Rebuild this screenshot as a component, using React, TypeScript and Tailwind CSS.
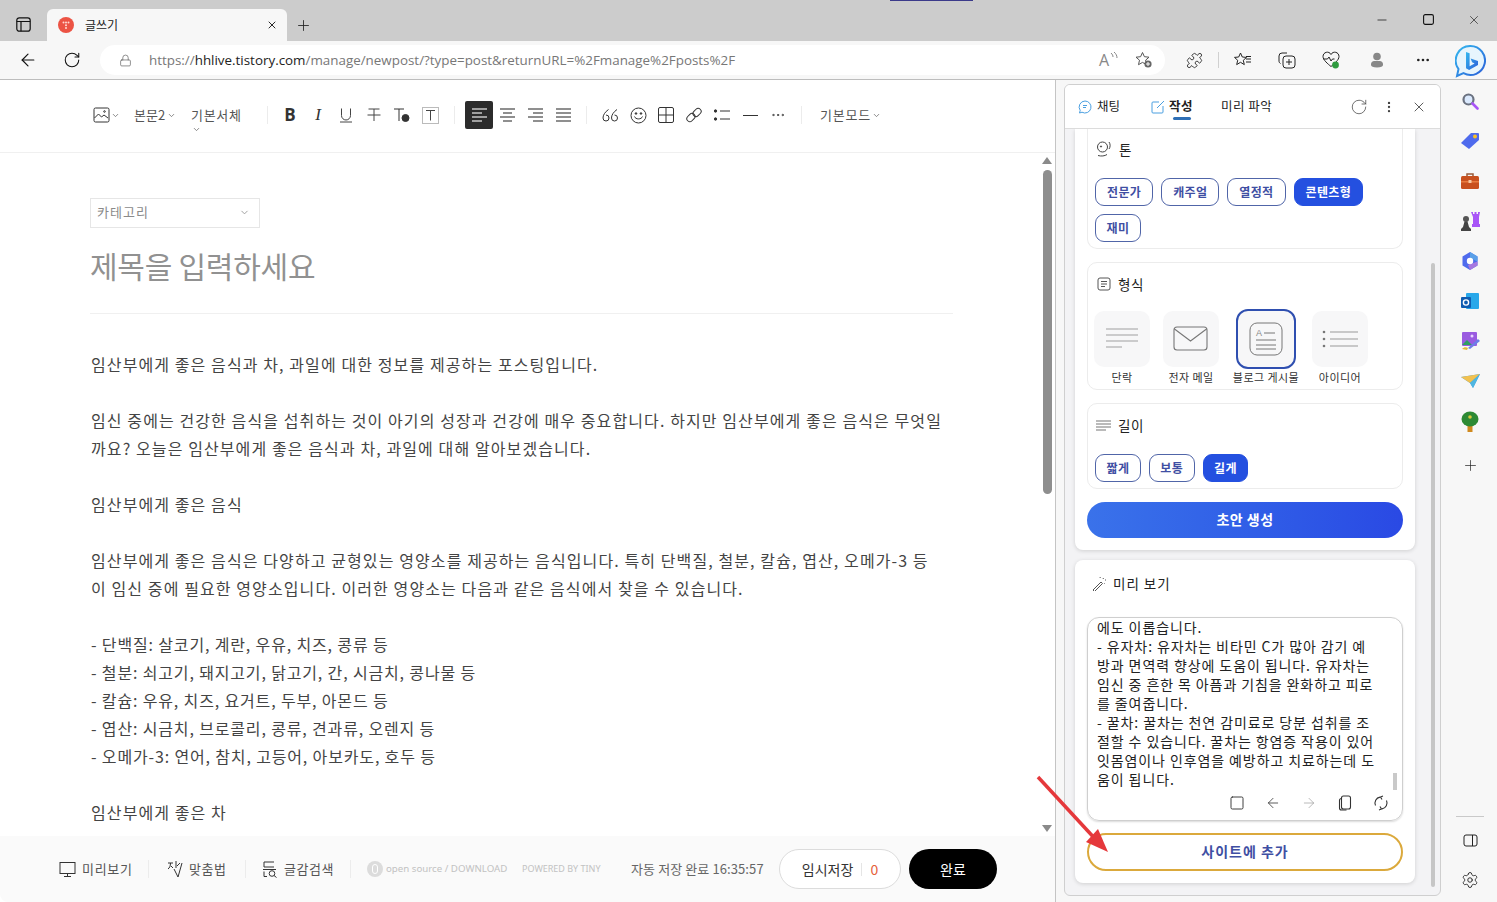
import { ArrowLeft, ArrowRight, ChevronDown, Lock, Minus, MoreHorizontal, MoreVertical, Plus, Puzzle, RotateCw, Settings, Square, X } from "lucide-react";
import type { ReactNode } from "react";

const BODY_LINES = [
  "임산부에게 좋은 음식과 차, 과일에 대한 정보를 제공하는 포스팅입니다.",
  "",
  "임신 중에는 건강한 음식을 섭취하는 것이 아기의 성장과 건강에 매우 중요합니다. 하지만 임산부에게 좋은 음식은 무엇일",
  "까요? 오늘은 임산부에게 좋은 음식과 차, 과일에 대해 알아보겠습니다.",
  "",
  "임산부에게 좋은 음식",
  "",
  "임산부에게 좋은 음식은 다양하고 균형있는 영양소를 제공하는 음식입니다. 특히 단백질, 철분, 칼슘, 엽산, 오메가-3 등",
  "이 임신 중에 필요한 영양소입니다. 이러한 영양소는 다음과 같은 음식에서 찾을 수 있습니다.",
  "",
  "- 단백질: 살코기, 계란, 우유, 치즈, 콩류 등",
  "- 철분: 쇠고기, 돼지고기, 닭고기, 간, 시금치, 콩나물 등",
  "- 칼슘: 우유, 치즈, 요거트, 두부, 아몬드 등",
  "- 엽산: 시금치, 브로콜리, 콩류, 견과류, 오렌지 등",
  "- 오메가-3: 연어, 참치, 고등어, 아보카도, 호두 등",
  "",
  "임산부에게 좋은 차",
];

const PREVIEW_LINES = [
  "에도 이롭습니다.",
  "- 유자차: 유자차는 비타민 C가 많아 감기 예",
  "방과 면역력 향상에 도움이 됩니다. 유자차는",
  "임신 중 흔한 목 아픔과 기침을 완화하고 피로",
  "를 줄여줍니다.",
  "- 꿀차: 꿀차는 천연 감미료로 당분 섭취를 조",
  "절할 수 있습니다. 꿀차는 항염증 작용이 있어",
  "잇몸염이나 인후염을 예방하고 치료하는데 도",
  "움이 됩니다.",
];

function Sep({ className = "" }: { className?: string }) {
  return <div className={`w-px h-[18px] bg-[#ececec] ${className}`} />;
}

function ToolBtn({ children, active }: { children: ReactNode; active?: boolean }) {
  return (
    <div
      className={`w-[28px] h-[28px] flex items-center justify-center rounded-[2px] ${
        active ? "bg-[#2b2b2b] text-white" : "text-[#333]"
      }`}
    >
      {children}
    </div>
  );
}

function AlignIcon({ kind }: { kind: "left" | "center" | "right" | "justify" }) {
  const rows: Record<string, string[]> = {
    left: ["M1 2h15", "M1 6h10", "M1 10h15", "M1 14h10"],
    center: ["M1 2h15", "M4 6h9", "M1 10h15", "M4 14h9"],
    right: ["M1 2h15", "M6 6h10", "M1 10h15", "M6 14h10"],
    justify: ["M1 2h15", "M1 6h15", "M1 10h15", "M1 14h15"],
  };
  return (
    <svg width="17" height="16" viewBox="0 0 17 16" stroke="currentColor" fill="none" strokeWidth="1.1">
      {rows[kind].map((d) => (
        <path key={d} d={d} />
      ))}
    </svg>
  );
}

function EditorToolbar() {
  return (
    <div className="h-[73px] shrink-0 border-b border-[#f0f0f0] flex items-center pl-[93px] pb-[2px] text-[13px] text-[#555]">
      <svg width="17" height="16" viewBox="0 0 17 16" fill="none" stroke="#333" strokeWidth="1">
        <rect x="1" y="1" width="15" height="14" rx="1.5" />
        <path d="M1.5 11l4-4 3 3 2.5-2 4 3" />
        <circle cx="11.5" cy="4.5" r="0.8" />
      </svg>
      <ChevronDown size={9} className="ml-[1px] text-[#666]" />
      <span className="ml-[14px] w-[32px] whitespace-nowrap">본문2</span>
      <ChevronDown size={9} className="ml-[1px] text-[#666]" />
      <div className="relative ml-[15px] w-[52px] whitespace-nowrap tracking-[0.7px]">
        기본서체
        <ChevronDown size={9} className="absolute left-[1px] top-[20px] text-[#666]" />
      </div>
      <Sep className="ml-[24px] mr-[8px]" />
      <ToolBtn>
        <span className="text-[17px] font-bold font-[family-name:'Open_Sans',sans-serif]">B</span>
      </ToolBtn>
      <ToolBtn>
        <span className="text-[17px] italic font-[family-name:'Liberation_Serif',serif]">I</span>
      </ToolBtn>
      <ToolBtn>
        <svg width="16" height="16" viewBox="0 0 16 16" fill="none" stroke="#444" strokeWidth="1">
          <path d="M3.5 1.5v7a4.5 4.5 0 0 0 9 0v-7" />
          <path d="M2 15h12" />
        </svg>
      </ToolBtn>
      <ToolBtn>
        <svg width="16" height="16" viewBox="0 0 16 16" fill="none" stroke="#444" strokeWidth="1">
          <path d="M2.5 2h11M8 2v12M1.5 8h13" />
        </svg>
      </ToolBtn>
      <ToolBtn>
        <svg width="18" height="16" viewBox="0 0 18 16" fill="none" stroke="#333" strokeWidth="1">
          <path d="M1 2h10M6 2v12" />
          <circle cx="12.5" cy="11" r="3.5" fill="#333" />
        </svg>
      </ToolBtn>
      <ToolBtn>
        <svg width="17" height="17" viewBox="0 0 17 17" fill="none" stroke="#444" strokeWidth="1">
          <rect x="0.5" y="0.5" width="16" height="16" stroke="#bbb" />
          <path d="M4 3.5h9M8.5 3.5v10" />
        </svg>
      </ToolBtn>
      <Sep className="ml-[10px] mr-[10px]" />
      <ToolBtn active>
        <AlignIcon kind="left" />
      </ToolBtn>
      <ToolBtn>
        <AlignIcon kind="center" />
      </ToolBtn>
      <ToolBtn>
        <AlignIcon kind="right" />
      </ToolBtn>
      <ToolBtn>
        <AlignIcon kind="justify" />
      </ToolBtn>
      <Sep className="ml-[9px] mr-[9px]" />
      <ToolBtn>
        <svg width="17" height="15" viewBox="0 0 17 15" fill="none" stroke="#333" strokeWidth="1">
          <path d="M6.5 1.5C3 4 1 7 1 10a3 3 0 1 0 3-3" />
          <path d="M15 1.5C11.5 4 9.5 7 9.5 10a3 3 0 1 0 3-3" />
        </svg>
      </ToolBtn>
      <ToolBtn>
        <svg width="17" height="17" viewBox="0 0 17 17" fill="none" stroke="#333" strokeWidth="1">
          <circle cx="8.5" cy="8.5" r="7.5" />
          <path d="M4.5 9.5c1 3.2 7 3.2 8 0" />
          <circle cx="6" cy="6.5" r="0.8" fill="#333" />
          <circle cx="11" cy="6.5" r="0.8" fill="#333" />
        </svg>
      </ToolBtn>
      <ToolBtn>
        <svg width="16" height="16" viewBox="0 0 16 16" fill="none" stroke="#333" strokeWidth="1">
          <rect x="0.5" y="0.5" width="15" height="15" rx="1.5" />
          <path d="M8 0.5v15M0.5 8h15" />
        </svg>
      </ToolBtn>
      <ToolBtn>
        <svg width="16" height="16" viewBox="0 0 16 16" fill="none" stroke="#333" strokeWidth="1">
          <rect x="0.4" y="7.5" width="9" height="6" rx="3" transform="rotate(-45 5 10.5)" />
          <rect x="6.6" y="2.5" width="9" height="6" rx="3" transform="rotate(-45 11 5.5)" />
        </svg>
      </ToolBtn>
      <ToolBtn>
        <svg width="16" height="12" viewBox="0 0 16 12" fill="none" stroke="#333" strokeWidth="1">
          <circle cx="1.5" cy="2" r="1.2" fill="#333" />
          <circle cx="1.5" cy="10" r="1.2" fill="#333" />
          <path d="M6 2h10M6 10h10" />
        </svg>
      </ToolBtn>
      <ToolBtn>
        <div className="w-[15px] h-px bg-[#333]" />
      </ToolBtn>
      <ToolBtn>
        <MoreHorizontal size={16} strokeWidth={1.5} className="text-[#444]" />
      </ToolBtn>
      <Sep className="ml-[9px] mr-[18px]" />
      <span className="whitespace-nowrap tracking-[0.8px]">기본모드</span>
      <ChevronDown size={9} className="ml-px text-[#666]" />
    </div>
  );
}

function EditorFooter() {
  return (
    <div className="h-[66px] shrink-0 bg-[#fafafa] rounded-bl-[8px] flex items-center pl-[59px] text-[13px] text-[#555] whitespace-nowrap">
      <svg width="17" height="17" viewBox="0 0 17 17" fill="none" stroke="#333" strokeWidth="1">
        <rect x="1" y="1.5" width="15" height="11" />
        <path d="M8.5 12.5v3M5 15.5h7" />
      </svg>
      <span className="ml-[6px] w-[51px] tracking-[0.7px]">미리보기</span>
      <Sep className="ml-[15px] mr-[18px]" />
      <svg width="16" height="18" viewBox="0 0 16 18" fill="none" stroke="#333" strokeWidth="1">
        <path d="M1 3h5M3.5 3c0 3-1 5-2.5 6M4 6l2 2M9 1v7M10 6l3-3M7 9l4 8 4-14" />
      </svg>
      <span className="ml-[6px] w-[39px] tracking-[0.6px]">맞춤법</span>
      <Sep className="ml-[17px] mr-[16px]" />
      <svg width="16" height="18" viewBox="0 0 16 18" fill="none" stroke="#333" strokeWidth="1">
        <path d="M12 2H2v5h10M1 9.5h13M2 11.5v5h3" />
        <circle cx="10" cy="13.5" r="2.8" />
        <path d="M12 15.5l2.5 2" />
      </svg>
      <span className="ml-[6px] w-[52px] tracking-[0.5px]">글감검색</span>
      <Sep className="ml-[14px] mr-[16px]" />
      <div className="w-[16px] h-[16px] rounded-full bg-[#dcdcdc] flex items-center justify-center">
        <div className="w-[6px] h-[10px] rounded-full border border-white" />
      </div>
      <span className="ml-[3px] w-[122px] text-[9.7px] text-[#c2c2c2] font-[family-name:'Noto_Sans',sans-serif]">
        open source / DOWNLOAD
      </span>
      <span className="ml-[14px] w-[80px] text-[9px] text-[#c2c2c2] font-[family-name:'Noto_Sans',sans-serif]">
        POWERED BY TINY
      </span>
      <span className="ml-[29px] w-[134px] text-[#666] tracking-[0.1px]">자동 저장 완료 16:35:57</span>
      <div className="ml-[14px] w-[122px] h-[40px] rounded-full border border-[#dcdcdc] bg-white flex items-center justify-center text-[14px] text-[#333]">
        임시저장
        <span className="mx-[8px] w-px h-[13px] bg-[#e5e5e5]" />
        <span className="text-[#e5603a]">0</span>
      </div>
      <div className="ml-[8px] w-[88px] h-[40px] rounded-full bg-black text-white flex items-center justify-center text-[14px]">
        완료
      </div>
    </div>
  );
}

function Editor() {
  return (
    <div className="w-[1056px] shrink-0 bg-white border-r border-[#c4c4c4] flex flex-col">
      <EditorToolbar />
      <div className="flex-1 min-h-0 flex">
        <div className="flex-1 min-w-0 overflow-hidden pt-[45px] pl-[90px] pr-[88px]">
          <div className="w-[170px] h-[30px] border border-[#e6e6e6] flex items-center justify-between pl-[6px] pr-[9px] pb-[2px] text-[13px] tracking-[1px] text-[#8a8a8a]">
            카테고리
            <ChevronDown size={11} className="text-[#999]" />
          </div>
          <div className="mt-[17px] pb-[28px] border-b border-[#f0f0f0] text-[30px] leading-[40px] tracking-[-0.25px] text-[#919191] whitespace-nowrap">
            제목을 입력하세요
          </div>
          <div className="mt-[36px] text-[16px] leading-[28px] text-[#444] whitespace-nowrap">
            {BODY_LINES.map((line, i) => (
              <div key={i} className={`h-[28px] pl-px ${line.startsWith("- ") ? "tracking-[0.85px]" : "tracking-[1.1px]"}`}>
                {line}
              </div>
            ))}
          </div>
        </div>
        <div className="w-[14px] shrink-0 flex flex-col items-center pt-[4px] pb-[4px] pr-[2px]">
          <div className="w-0 h-0 border-x-[5px] border-x-transparent border-b-[7px] border-b-[#8a8a8a]" />
          <div className="mt-[6px] w-[9px] h-[324px] rounded-full bg-[#8e8e8e]" />
          <div className="flex-1" />
          <div className="w-0 h-0 border-x-[5px] border-x-transparent border-t-[7px] border-t-[#8a8a8a]" />
        </div>
      </div>
      <EditorFooter />
    </div>
  );
}

function Chip({ label, on }: { label: string; on?: boolean }) {
  return (
    <div
      className={`h-[28px] rounded-[9px] border flex items-center text-[12px] tracking-[0.35px] font-semibold whitespace-nowrap ${
        label.length === 2 ? "px-[10.5px]" : "px-[11px]"
      } ${on ? "bg-[#2450e0] border-[#2450e0] text-white" : "bg-white border-[#5065a8] text-[#3f4fa3]"}`}
    >
      {label}
    </div>
  );
}

function Tile({ label, on, children, className = "" }: { label: string; on?: boolean; children: ReactNode; className?: string }) {
  return (
    <div className={`flex flex-col items-center ${on ? "w-[60px]" : "w-[56px] pt-[2px]"} ${className}`}>
      <div
        className={`flex items-center justify-center ${
          on
            ? "w-[60px] h-[60px] rounded-[12px] border-2 border-[#2f4fb0] bg-[#f7f7f8]"
            : "w-[56px] h-[56px] rounded-[10px] bg-[#f7f7f8]"
        }`}
      >
        {children}
      </div>
      <span className={`${on ? "mt-[1px]" : "mt-[3px]"} text-[11px] leading-[14px] tracking-[0.45px] text-[#333] whitespace-nowrap`}>{label}</span>
    </div>
  );
}

function SidePanel() {
  return (
    <div className="w-[378px] ml-[8px] mt-[4px] mb-[6px] rounded-[6px] border border-[#cfcfcf] bg-[#f3f3f5] flex flex-col overflow-hidden">
      <div className="h-[44px] shrink-0 bg-white border-b border-[#dcdcdc] flex items-center pl-[13px] text-[12.5px] text-[#222]">
        <svg width="14" height="14" viewBox="0 0 14 14" fill="none" stroke="#4a9fe0" strokeWidth="1">
          <path d="M7 1a6 6 0 1 1-3 11.2L1.500 13l.7-2.600A6 6 0 0 1 7 1z" />
          <path d="M5 5.500h4M5 7.500h3" />
        </svg>
        <span className="ml-[5px] w-[25px] whitespace-nowrap">채팅</span>
        <svg width="14" height="14" viewBox="0 0 14 14" fill="none" stroke="#4a9fe0" strokeWidth="1" className="ml-[29px]">
          <path d="M8 2H2a1 1 0 0 0-1 1v9a1 1 0 0 0 1 1h9a1 1 0 0 0 1-1V6" />
          <path d="M6 8l7-7" />
        </svg>
        <div className="relative ml-[4px] w-[25px] whitespace-nowrap font-semibold tracking-[0.4px]">
          작성
          <div className="absolute left-[4px] top-[20px] w-[18px] h-[3px] rounded-full bg-[#2f6fb5]" />
        </div>
        <span className="ml-[27px] w-[52px] whitespace-nowrap tracking-[0.5px]">미리 파악</span>
        <RotateCw size={18} strokeWidth={1} className="ml-[77px] text-[#444]" />
        <MoreVertical size={14} strokeWidth={2} className="ml-[14px] text-[#444]" />
        <X size={16} strokeWidth={1.2} className="ml-[15px] text-[#333]" />
      </div>
      <div className="flex-1 min-h-0 flex overflow-hidden">
        <div className="w-[340px] ml-[10px] shrink-0 flex flex-col gap-[10px]">
          <div className="h-[421px] shrink-0 bg-white rounded-b-[8px] shadow-[0_1px_4px_rgba(0,0,0,0.15)] px-[12px] flex flex-col">
            <div className="h-[120px] shrink-0 border border-t-0 border-[#ececec] rounded-b-[10px] pl-[7px]">
              <div className="flex items-center gap-[7px] mt-[10px] h-[20px] pl-px text-[13.5px] text-[#222]">
                <svg width="16" height="16" viewBox="0 0 16 16" fill="none" stroke="#444" strokeWidth="1">
                  <circle cx="6.5" cy="6" r="5" />
                  <path d="M2 14.5c3 1 7 .5 9-1M13 1c1.500 2 1.500 5 0 7" />
                  <circle cx="5" cy="5.5" r="0.6" fill="#444" />
                </svg>
                톤
              </div>
              <div className="mt-[19px] flex flex-wrap gap-x-[8px] gap-y-[8px] w-[300px]">
                {["전문가", "캐주얼", "열정적"].map((c) => (
                  <Chip key={c} label={c} />
                ))}
                <Chip label="콘텐츠형" on />
                <Chip label="재미" />
              </div>
            </div>
            <div className="mt-[13px] h-[128px] shrink-0 border border-[#ececec] rounded-[10px]">
              <div className="flex items-center gap-[7px] mt-[11px] h-[20px] pl-[9px] text-[13.5px] tracking-[0.5px] text-[#222]">
                <svg width="14" height="14" viewBox="0 0 14 14" fill="none" stroke="#555" strokeWidth="1">
                  <rect x="1" y="1" width="12" height="12" rx="2" />
                  <path d="M4 4.5h6M4 7h6M4 9.5h4" />
                </svg>
                형식
              </div>
              <div className="mt-[15px] pl-[6px] flex items-start">
                <Tile label="단락">
                  <svg width="34" height="24" viewBox="0 0 34 24" fill="none" stroke="#bdbdbd" strokeWidth="1.5">
                    <path d="M1 2h32M1 8h32M1 14h32M1 20h16" />
                  </svg>
                </Tile>
                <Tile label="전자 메일" className="ml-[13px]">
                  <svg width="36" height="26" viewBox="0 0 36 26" fill="none" stroke="#777" strokeWidth="1.1">
                    <rect x="1" y="1" width="33" height="23" rx="3" />
                    <path d="M1.500 3l16 12 16-12" />
                  </svg>
                </Tile>
                <Tile label="블로그 게시물" on className="ml-[17px]">
                  <svg width="34" height="34" viewBox="0 0 34 34" fill="none" stroke="#777" strokeWidth="1">
                    <rect x="1" y="1" width="32" height="32" rx="7" />
                    <path d="M15 11h11M7 18h20M7 23h20M7 27h20" />
                    <text x="7" y="14" fontSize="9" fill="#888" stroke="none" fontFamily="Liberation Sans, sans-serif">A</text>
                  </svg>
                </Tile>
                <Tile label="아이디어" className="ml-[16px]">
                  <svg width="36" height="20" viewBox="0 0 36 20" fill="none" stroke="#999" strokeWidth="1">
                    <circle cx="2" cy="3" r="1.3" fill="#777" stroke="none" />
                    <circle cx="2" cy="10" r="1.3" fill="#777" stroke="none" />
                    <circle cx="2" cy="17" r="1.3" fill="#777" stroke="none" />
                    <path d="M8 3h28M8 10h28M8 17h28" />
                  </svg>
                </Tile>
              </div>
            </div>
            <div className="mt-[13px] h-[86px] shrink-0 border border-[#ececec] rounded-[10px] pl-[7px]">
              <div className="flex items-center gap-[7px] mt-[11px] h-[20px] text-[13.5px] tracking-[0.5px] text-[#222]">
                <svg width="15" height="11" viewBox="0 0 15 11" fill="none" stroke="#777" strokeWidth="1.1" className="ml-px">
                  <path d="M0 1h15M0 4h15M0 7h15M0 10h10" />
                </svg>
                길이
              </div>
              <div className="mt-[19px] flex gap-[8px]">
                <Chip label="짧게" />
                <Chip label="보통" />
                <Chip label="길게" on />
              </div>
            </div>
            <div className="mt-[13px] h-[36px] shrink-0 rounded-full bg-gradient-to-r from-[#3a72ea] to-[#2a49e4] text-white text-[14px] tracking-[0.5px] font-semibold flex items-center justify-center pb-px">
              초안 생성
            </div>
          </div>
          <div className="h-[323px] shrink-0 bg-white rounded-[8px] shadow-[0_1px_4px_rgba(0,0,0,0.15)] px-[12px] pt-[13px]">
            <div className="flex items-center gap-[6px] h-[20px] text-[13.5px] tracking-[1px] text-[#222]">
              <svg width="15" height="15" viewBox="0 0 15 15" fill="none" stroke="#555" strokeWidth="1" className="ml-[5px]">
                <path d="M1 14l8-8 1.500 1.500-8 8z" />
                <path d="M11 2l.5 1M14 4h-1M13 8l-.6-.6M8 1l.3 1" />
              </svg>
              미리 보기
            </div>
            <div className="mt-[24px] h-[204px] rounded-[12px] border border-[#cfcfcf] shadow-[0_1px_2px_rgba(0,0,0,0.15)] relative overflow-hidden">
              <div className="pl-[9px] text-[14px] leading-[19px] tracking-[0.9px] text-[#222] whitespace-nowrap">
                {PREVIEW_LINES.map((line) => (
                  <div key={line}>{line}</div>
                ))}
              </div>
              <div className="absolute left-[305px] top-[155px] w-[4px] h-[17px] bg-[#c9c9c9]" />
              <div className="pl-[141px] mt-[6px] flex items-center gap-[20px] text-[#333]">
                <Square size={16} strokeWidth={1.4} />
                <ArrowLeft size={16} strokeWidth={1.2} />
                <ArrowRight size={16} strokeWidth={1} className="text-[#999]" />
                <svg width="16" height="16" viewBox="0 0 16 16" fill="none" stroke="#333" strokeWidth="1.1">
                  <rect x="4.500" y="1" width="9" height="13" rx="2" />
                  <path d="M4.500 3.500C3 3.500 2.500 4.500 2.500 5.500v7.500c0 1 1 2 2 2h5" />
                </svg>
                <svg width="16" height="16" viewBox="0 0 16 16" fill="none" stroke="#333" strokeWidth="1.1">
                  <path d="M2.500 10.500A6 6 0 0 1 7 2.100M10 1l-2.500 1 1.500 2.500" />
                  <path d="M13.500 5.500A6 6 0 0 1 9 13.900M6 15l2.500-1L7 11.500" />
                </svg>
              </div>
            </div>
            <div className="mt-[12px] h-[38px] rounded-full border-2 border-[#dba93c] flex items-center justify-center pb-[2px] text-[14px] tracking-[1px] font-semibold text-[#3f4fa3]">
              사이트에 추가
            </div>
          </div>
        </div>
        <div className="ml-[16px] w-[4px] mt-[134px] mb-[8px] rounded-full bg-[#c6c6c6]" />
      </div>
    </div>
  );
}

function RailIcon({ children }: { children: ReactNode }) {
  return <div className="h-[40px] flex items-center justify-center">{children}</div>;
}

function Rail() {
  return (
    <div className="w-[56px] shrink-0 flex flex-col items-center pt-[1px] pl-[2px]">
      <RailIcon>
        <svg width="18" height="18" viewBox="0 0 18 18" fill="none">
          <circle cx="7.5" cy="7.5" r="5" stroke="#6b7280" strokeWidth="2.2" fill="#dbeafe" />
          <path d="M11.5 11.5l5 5" stroke="#a855f7" strokeWidth="2.6" strokeLinecap="round" />
        </svg>
      </RailIcon>
      <RailIcon>
        <svg width="20" height="18" viewBox="0 0 20 18">
          <path d="M1 11L11 1h7a1 1 0 0 1 1 1v6L9 17z" fill="#4f6bed" />
          <circle cx="15" cy="4.5" r="2" fill="#fbbf24" />
        </svg>
      </RailIcon>
      <RailIcon>
        <svg width="20" height="17" viewBox="0 0 20 17">
          <path d="M7 3V1h6v2" stroke="#9a5b3a" strokeWidth="1.5" fill="none" />
          <rect x="1" y="3" width="18" height="13" rx="1.5" fill="#c8501e" />
          <rect x="1" y="8" width="18" height="1.5" fill="#e97b3e" />
          <rect x="8.5" y="7" width="3" height="3" fill="#f7c9a4" />
        </svg>
      </RailIcon>
      <RailIcon>
        <svg width="20" height="20" viewBox="0 0 20 20">
          <path d="M11 1h2v2h1.500V1h2v2H18V1h2l-1 5v7h1v3h-8v-3h1V6z" fill="#a855f7" />
          <circle cx="6" cy="8" r="3" fill="#555" />
          <path d="M4.500 10.500h3L9 16l2 2v2H1v-2l2-2z" fill="#444" />
        </svg>
      </RailIcon>
      <RailIcon>
        <svg width="18" height="18" viewBox="0 0 18 18">
          <path d="M9 0l7.500 4.500v9L9 18l-7.500-4.500v-9z" fill="#4f6bed" />
          <path d="M9 0l7.500 4.500v5L9 6z" fill="#5aa0e8" />
          <path d="M16.500 9.500v4L9 18l-2-5z" fill="#a678e0" />
          <circle cx="9" cy="9" r="3.2" fill="#fff" />
        </svg>
      </RailIcon>
      <RailIcon>
        <svg width="18" height="17" viewBox="0 0 18 17">
          <rect x="5" y="0" width="13" height="16" rx="1" fill="#28a8ea" />
          <rect x="0" y="4" width="10" height="11" rx="1" fill="#0f5cb0" />
          <circle cx="5" cy="9.5" r="2.6" fill="none" stroke="#fff" strokeWidth="1.4" />
        </svg>
      </RailIcon>
      <RailIcon>
        <svg width="19" height="19" viewBox="0 0 19 19">
          <rect x="1" y="0" width="15" height="14" rx="1" fill="#9a5be0" />
          <path d="M1 13l5-5 5 5z" fill="#2f9e64" />
          <circle cx="11" cy="4" r="1.5" fill="#e9d5ff" />
          <path d="M7 16L17 7l2 2-10 8z" fill="#6d7de8" />
          <path d="M1 17c2-2 4-2 6-1l-1 2z" fill="#e2b93b" />
        </svg>
      </RailIcon>
      <RailIcon>
        <svg width="19" height="15" viewBox="0 0 19 15">
          <path d="M0 3l19-3-7 14-3-5z" fill="#3d9be9" />
          <path d="M0 3l9 6 10-9z" fill="#f2c14e" />
          <path d="M9 9l3 5 7-14z" fill="#4fb6e0" />
        </svg>
      </RailIcon>
      <RailIcon>
        <svg width="18" height="21" viewBox="0 0 18 21">
          <rect x="6.500" y="13" width="5" height="8" fill="#d08a1e" />
          <ellipse cx="9" cy="8" rx="8.500" ry="7.500" fill="#2d8a34" />
          <circle cx="9" cy="6" r="1.800" fill="#d9c93c" />
        </svg>
      </RailIcon>
      <div className="mt-[4px]">
        <RailIcon>
          <Plus size={17} strokeWidth={1} className="text-[#222]" />
        </RailIcon>
      </div>
      <div className="flex-1" />
      <div className="w-[28px] h-px bg-[#c9c9c9]" />
      <div className="mt-[3px]">
        <RailIcon>
          <svg width="15" height="13" viewBox="0 0 15 13" fill="none" stroke="#222" strokeWidth="1">
            <rect x="1" y="1" width="13" height="11" rx="2" />
            <path d="M9.5 1v11" />
          </svg>
        </RailIcon>
      </div>
      <div className="mb-[2px]">
        <RailIcon>
          <Settings size={18} strokeWidth={1.2} className="text-[#222]" />
        </RailIcon>
      </div>
    </div>
  );
}

function BrowserChrome() {
  return (
    <>
      <div className="h-[41px] shrink-0 bg-[#cccccc] flex items-end relative text-[#222]">
        <div className="w-[47px] h-[32px] flex items-center justify-center pb-[2px]">
          <svg width="15" height="15" viewBox="0 0 15 15" fill="none" stroke="#111" strokeWidth="1.2">
            <rect x="0.8" y="0.8" width="13.4" height="13.4" rx="2.5" />
            <path d="M0.8 4.5h13.4M5 4.5v9.7" />
          </svg>
        </div>
        <div className="w-[240px] h-[32px] bg-[#f7f7f7] rounded-t-[6px] flex items-center pl-[11px] pr-[9px]">
          <div className="w-[16px] h-[16px] rounded-full bg-[#ec5344] flex items-center justify-center">
            <svg width="8" height="8" viewBox="0 0 8 8" fill="#ffd9d2">
              <circle cx="1.5" cy="1.5" r="1" />
              <circle cx="4" cy="1.5" r="1" />
              <circle cx="6.5" cy="1.5" r="1" />
              <circle cx="4" cy="4.2" r="1" />
              <circle cx="4" cy="6.9" r="1" />
            </svg>
          </div>
          <span className="ml-[11px] text-[12px] text-[#222]">글쓰기</span>
          <X size={12} strokeWidth={1.8} className="ml-auto text-[#111]" />
        </div>
        <div className="h-[32px] ml-[8px] flex items-center">
          <Plus size={17} strokeWidth={1.2} />
        </div>
        <div className="absolute left-[890px] top-0 w-[83px] h-px bg-[#3b3a8a]" />
        <div className="ml-auto h-[41px] flex items-center pb-[2px] gap-[33.5px] pr-[16px] pl-4">
          <Minus size={14} strokeWidth={1.4} />
          <svg width="11" height="11" viewBox="0 0 11 11" fill="none" stroke="#111" strokeWidth="1.1">
            <rect x="0.6" y="0.6" width="9.8" height="9.8" rx="1.6" />
          </svg>
          <X size={14} strokeWidth={1.2} />
        </div>
      </div>
      <div className="h-[39px] shrink-0 bg-[#f7f7f7] border-b border-[#bdbdbd] flex items-center">
        <ArrowLeft size={20} strokeWidth={1.4} className="ml-[18px] text-[#111]" />
        <RotateCw size={18} strokeWidth={1.4} className="ml-[25px] text-[#111]" />
        <div className="ml-[19px] w-[1065px] h-[30px] rounded-full bg-white flex items-center pl-[19px] relative">
          <Lock size={13} strokeWidth={1.2} className="text-[#555]" />
          <span className="ml-[17px] text-[13.4px] text-[#777] whitespace-nowrap font-[family-name:'Open_Sans',sans-serif]">
            https://<span className="text-[#222]">hhlive.tistory.com</span>/manage/newpost/?type=post&returnURL=%2Fmanage%2Fposts%2F
          </span>
          <span className="absolute left-[999px] text-[16px] text-[#888] font-[family-name:'Open_Sans',sans-serif]">A</span>
          <svg width="8" height="10" viewBox="0 0 8 10" fill="none" stroke="#888" strokeWidth="1" className="absolute left-[1010px] top-[7px]">
            <path d="M1 1c1.500 1.500 2 2.500 2 4M4 0c2 1.800 3 3.500 3 6" />
          </svg>
          <svg width="18" height="18" viewBox="0 0 18 18" fill="none" stroke="#555" strokeWidth="1" className="absolute left-[1035px]">
            <path d="M7.500 1.500l1.900 4.200 4.600.5-3.400 3 1 4.500-4.100-2.300-4 2.300 1-4.500L1 6.200l4.600-.5z" />
            <circle cx="13" cy="13" r="3.600" fill="#666" stroke="none" />
            <path d="M13 11v4M11 13h4" stroke="#fff" />
          </svg>
        </div>
        <Puzzle size={17} strokeWidth={1.2} className="ml-[21px] text-[#222]" />
        <div className="ml-[15px] w-px h-[16px] bg-[#d0d0d0]" />
        <svg width="18" height="16" viewBox="0 0 18 16" fill="none" stroke="#222" strokeWidth="1" className="ml-[15px]">
          <path d="M6.500 1l1.800 4 4.200.4-3.200 2.900 1 4.300-3.800-2.300L2.700 12.600l1-4.300L.5 5.400l4.200-.4z" />
          <path d="M12 7h5M12 10h5M12 4.500h5" />
        </svg>
        <svg width="18" height="18" viewBox="0 0 18 18" fill="none" stroke="#222" strokeWidth="1" className="ml-[26px]">
          <path d="M9 2H4a3 3 0 0 0-3 3v5c0 1 .5 2 1.500 2.500" />
          <rect x="5" y="5" width="12" height="12" rx="3" />
          <path d="M11 8v6M8 11h6" />
        </svg>
        <svg width="18" height="18" viewBox="0 0 18 18" fill="none" stroke="#222" strokeWidth="1" className="ml-[26px]">
          <path d="M9 3.500C7-.5 1 1 1 5.500c0 3.500 5 7.500 8 10 3-2.500 8-6.500 8-10C17 1 11-.5 9 3.500z" />
          <path d="M1.500 8h4l1.500-2 2 4 1.500-2h2" />
          <circle cx="13.500" cy="14" r="3.400" fill="#2e9b3e" stroke="none" />
        </svg>
        <svg width="14" height="16" viewBox="0 0 14 16" fill="#888" className="ml-[30px]">
          <circle cx="7" cy="4.500" r="3.800" />
          <path d="M1 12c0-2 2-3 3-3h6c1 0 3 1 3 3v1c0 1.500-2 2.500-6 2.500S1 14.500 1 13z" />
        </svg>
        <MoreHorizontal size={16} strokeWidth={2} className="ml-[31px] text-[#222]" />
        <svg width="31" height="33" viewBox="0 0 31 33" className="ml-[24px] mt-[2px]">
          <defs>
            <linearGradient id="bingRing" x1="0" y1="0" x2="1" y2="1">
              <stop offset="0" stopColor="#35b8ef" />
              <stop offset="1" stopColor="#2b5fd8" />
            </linearGradient>
          </defs>
          <path d="M15.500 1a14.500 14.500 0 1 1-7 27.200L2 31l1.500-7A14.500 14.500 0 0 1 15.500 1z" fill="#e7f5fd" stroke="url(#bingRing)" strokeWidth="2" />
          <path d="M11 7l3.600 1.300v13l5-2.900-2.500-1.200-1.500-3.700 7.400 2.600v3.800l-8.900 5.200-3.100-1.800z" fill="url(#bingRing)" />
        </svg>
      </div>
    </>
  );
}

export default function App() {
  return (
    <div className="relative w-[1497px] h-[902px] overflow-hidden bg-[#f7f7f7] flex flex-col font-[family-name:'Noto_Sans_CJK_KR',sans-serif]">
      <BrowserChrome />
      <div className="flex-1 min-h-0 flex">
        <Editor />
        <SidePanel />
        <Rail />
      </div>
      <svg width="90" height="95" viewBox="0 0 90 95" className="absolute left-[1030px] top-[770px]">
        <path d="M8 7l60 65" stroke="#e5383b" strokeWidth="3.5" fill="none" />
        <path d="M78 82L56 72l12-13z" fill="#e5383b" />
      </svg>
    </div>
  );
}
